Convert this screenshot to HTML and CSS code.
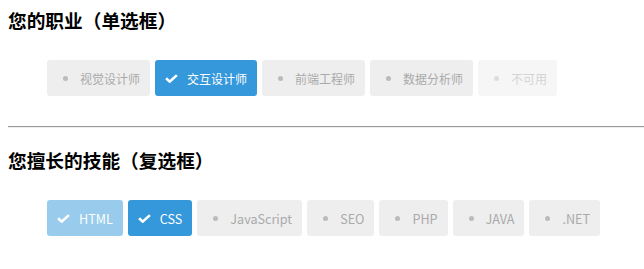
FILE: index.html
```html
<!DOCTYPE html>
<html lang="zh-CN">
<head>
  <meta charset="UTF-8">
  <meta name="viewport" content="width=device-width, initial-scale=1.0">
  <title>单选框与复选框</title>
  <link rel="stylesheet" href="styles.css">
</head>
<body>
  <h3 class="title">您的职业（单选框）</h3>
  <div class="options">
    <span class="opt"><i class="dot"></i>视觉设计师</span>
    <span class="opt checked"><svg class="check" viewBox="0 0 13 9"><polyline points="1.1,4.3 4.7,7.6 11.9,1.1"/></svg>交互设计师</span>
    <span class="opt"><i class="dot"></i>前端工程师</span>
    <span class="opt"><i class="dot"></i>数据分析师</span>
    <span class="opt disabled"><i class="dot"></i>不可用</span>
  </div>

  <hr>

  <h3 class="title">您擅长的技能（复选框）</h3>
  <div class="options skills">
    <span class="opt checked disabled"><svg class="check" viewBox="0 0 13 9"><polyline points="1.1,4.3 4.7,7.6 11.9,1.1"/></svg>HTML</span>
    <span class="opt checked"><svg class="check" viewBox="0 0 13 9"><polyline points="1.1,4.3 4.7,7.6 11.9,1.1"/></svg>CSS</span>
    <span class="opt"><i class="dot"></i>JavaScript</span>
    <span class="opt"><i class="dot"></i>SEO</span>
    <span class="opt"><i class="dot"></i>PHP</span>
    <span class="opt"><i class="dot"></i>JAVA</span>
    <span class="opt"><i class="dot"></i>.NET</span>
  </div>
</body>
</html>
```

FILE: styles.css
```css
body {
  margin: 8px 0 0 8px;
  font-family: "Noto Sans CJK SC", "Noto Sans", sans-serif;
  background: #fff;
}
.title {
  margin: 0;
  font-size: 18.7px;
  line-height: 24px;
  font-weight: bold;
  color: #000;
}
hr {
  margin: 30px 0 20px 0;
  border: 0;
  border-top: 1px solid #9a9a9a;
  border-bottom: 1px solid #eee;
}
.options {
  display: flex;
  gap: 5px;
  margin-top: 28px;
  padding-left: 39px;
}
.opt {
  display: flex;
  align-items: center;
  height: 36px;
  padding: 0 10px;
  background-color: #eee;
  color: #aaa;
  font-size: 12px;
  border-radius: 3px;
  box-sizing: border-box;
}
.skills .opt {
  font-size: 12.6px;
}
.dot {
  width: 5px;
  height: 5px;
  border-radius: 50%;
  background-color: #bbb;
  margin: 0 12px 0 6px;
}
.check {
  width: 13px;
  height: 9px;
  margin: 0 9px 0 0;
  fill: none;
  stroke: #fff;
  stroke-width: 2.6;
}
.opt.checked {
  background-color: #3498db;
  color: #fff;
}
.opt.disabled {
  opacity: 0.5;
}
```
